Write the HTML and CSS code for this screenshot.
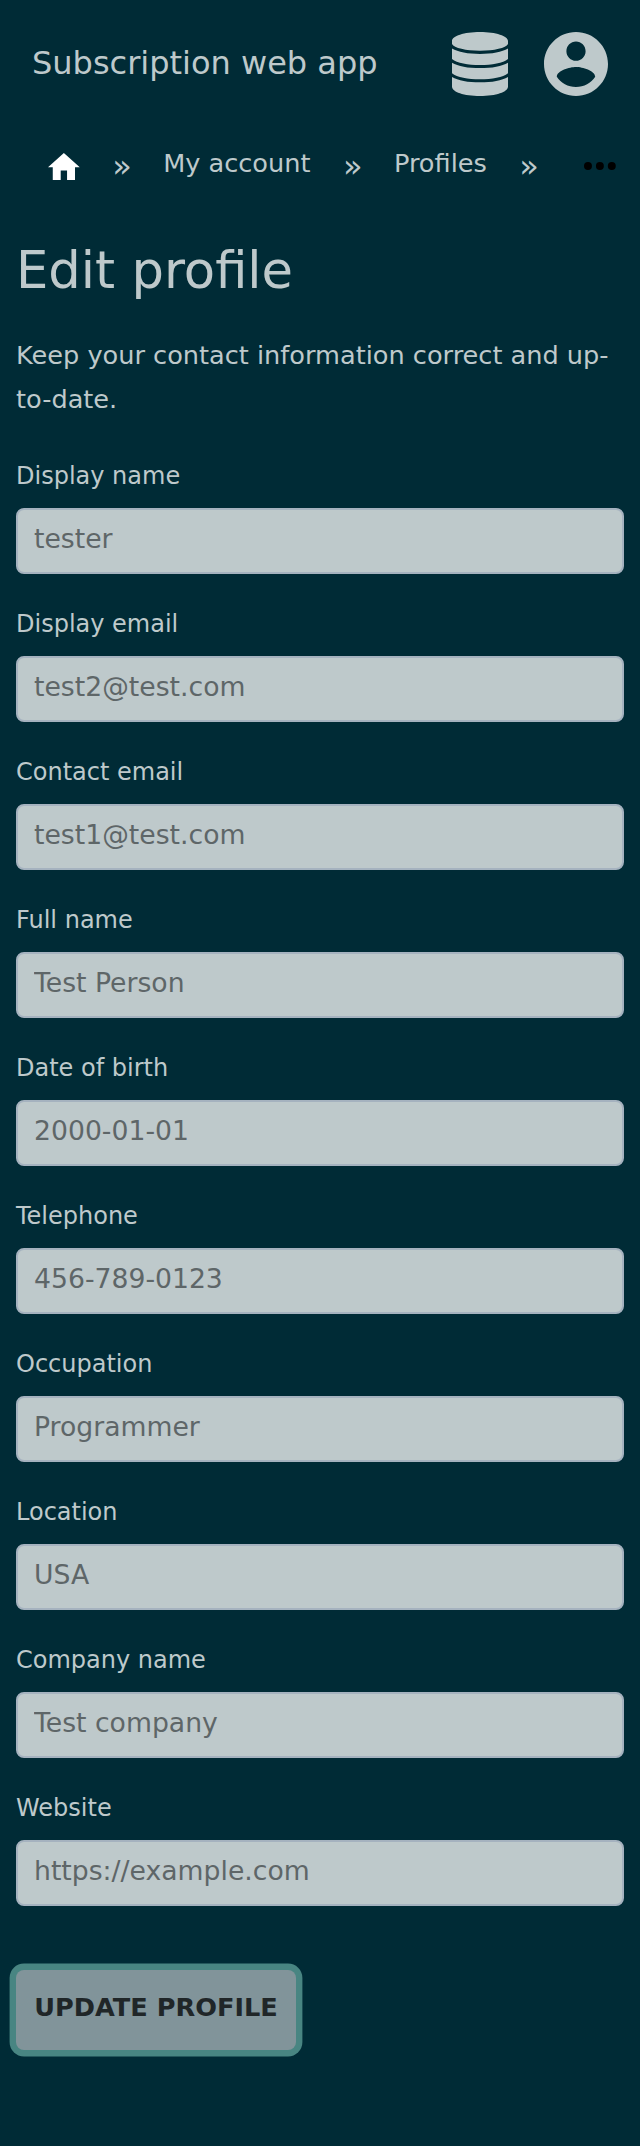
FILE: index.html
```
<!DOCTYPE html>
<html lang="en">
<head>
<meta charset="utf-8">
<title>Edit profile</title>
<link rel="stylesheet" href="styles.css">
</head>
<body>
<header class="topbar">
  <a class="brand">Subscription web app</a>
  <nav class="actions">
    <svg class="db-icon" viewBox="0 0 56 64"><path d="M0 9C0 4 12 0 28 0s28 4 28 9v3C54 16 42 18.700 28 18.700S2 16 0 12zM0 16.500c6 3.600 16 5.400 28 5.400s22-1.800 28-5.400v10.500c-5 4-16 6-28 6s-23-2-28-6zM0 30.700c6 3.600 16 5.400 28 5.400s22-1.800 28-5.400v10.500c-5 4-16 6-28 6s-23-2-28-6zM0 44.900c6 3.600 16 5.400 28 5.400s22-1.800 28-5.400v9.600C56 60 44 64 28 64S0 60 0 54.500z"/></svg>
    <svg class="user-icon" viewBox="2 2 20 20"><path d="M12 2C6.480 2 2 6.480 2 12s4.480 10 10 10 10-4.480 10-10S17.520 2 12 2zm0 3c1.660 0 3 1.340 3 3s-1.340 3-3 3-3-1.340-3-3 1.340-3 3-3zm0 14.200c-2.500 0-4.710-1.280-6-3.220.03-1.990 4-3.080 6-3.080 1.990 0 5.970 1.090 6 3.080-1.290 1.940-3.500 3.220-6 3.220z"/></svg>
  </nav>
</header>
<nav class="crumbs">
  <svg class="home-icon" viewBox="2 3 20 17"><path d="M10 20v-6h4v6h5v-8h3L12 3 2 12h3v8z"/></svg>
  <span class="sep">»</span>
  <a class="crumb">My account</a>
  <span class="sep">»</span>
  <a class="crumb">Profiles</a>
  <span class="sep">»</span>
  <svg class="more-icon" viewBox="0 0 32 8"><circle cx="4" cy="4" r="4"/><circle cx="16" cy="4" r="4"/><circle cx="28" cy="4" r="4"/></svg>
</nav>
<main class="content">
  <h1 class="title">Edit profile</h1>
  <p class="intro">Keep your contact information correct and up-to-date.</p>
  <form class="form">
    <label class="field">Display name<input class="input" type="text" placeholder="tester"></label>
    <label class="field">Display email<input class="input" type="text" placeholder="test2@test.com"></label>
    <label class="field">Contact email<input class="input" type="text" placeholder="test1@test.com"></label>
    <label class="field">Full name<input class="input" type="text" placeholder="Test Person"></label>
    <label class="field">Date of birth<input class="input" type="text" placeholder="2000-01-01"></label>
    <label class="field">Telephone<input class="input" type="text" placeholder="456-789-0123"></label>
    <label class="field">Occupation<input class="input" type="text" placeholder="Programmer"></label>
    <label class="field">Location<input class="input" type="text" placeholder="USA"></label>
    <label class="field">Company name<input class="input" type="text" placeholder="Test company"></label>
    <label class="field">Website<input class="input" type="text" placeholder="https://example.com"></label>
    <button class="submit" type="button">UPDATE PROFILE</button>
  </form>
</main>
</body>
</html>
```

FILE: styles.css
```
* { box-sizing: border-box; }
body {
  margin: 0;
  min-height: 2146px;
  background: #002b36;
  color: #bec9cb;
  font: 25.6px/44px "DejaVu Sans", sans-serif;
}
.topbar {
  display: flex;
  justify-content: space-between;
  align-items: center;
  height: 128px;
  padding: 0 32px;
}
.brand { padding-bottom: 2px; font-size: 32px; }
.actions { display: flex; gap: 36px; }
.db-icon { width: 56px; height: 64px; fill: currentColor; }
.user-icon { width: 64px; height: 64px; fill: currentColor; }
.crumbs {
  display: flex;
  height: 72px;
  padding: 13px 24px 0 48px;
}
.home-icon { width: 32px; height: 27px; margin-top: 12px; fill: #fff; }
.sep { width: 84px; padding: 3px 0 0 1px; font-size: 32px; text-align: center; }
.crumb { white-space: nowrap; }
.more-icon { width: 32px; height: 8px; margin: 21px 0 0 14px; fill: #000; }
.content { padding: 32px 16px 0; }
.title { margin: 0; font-size: 51.2px; font-weight: 400; line-height: 76px; }
.intro { margin: 25px 0 0; }
.form { margin-top: 33px; }
.field { display: block; height: 148px; font-size: 24px; line-height: 44px; }
.input {
  display: block;
  width: 100%;
  height: 66px;
  margin-top: 10px;
  padding: 0 16px 5px;
  border: 2px solid #a5b2bf;
  border-radius: 8px;
  background: #bec9cb;
  color: #5e6668;
  font: 26.667px "DejaVu Sans", sans-serif;
}
.input::placeholder { color: #5e6668; opacity: 1; }
.submit {
  display: block;
  width: 280px;
  height: 80px;
  margin-top: 36px;
  padding: 0 0 6px;
  border: 0;
  border-radius: 8px;
  background: #81949a;
  color: #202628;
  box-shadow: 0 0 0 6.4px #488582;
  font: bold 25.6px "DejaVu Sans", sans-serif;
  white-space: nowrap;
}
```
